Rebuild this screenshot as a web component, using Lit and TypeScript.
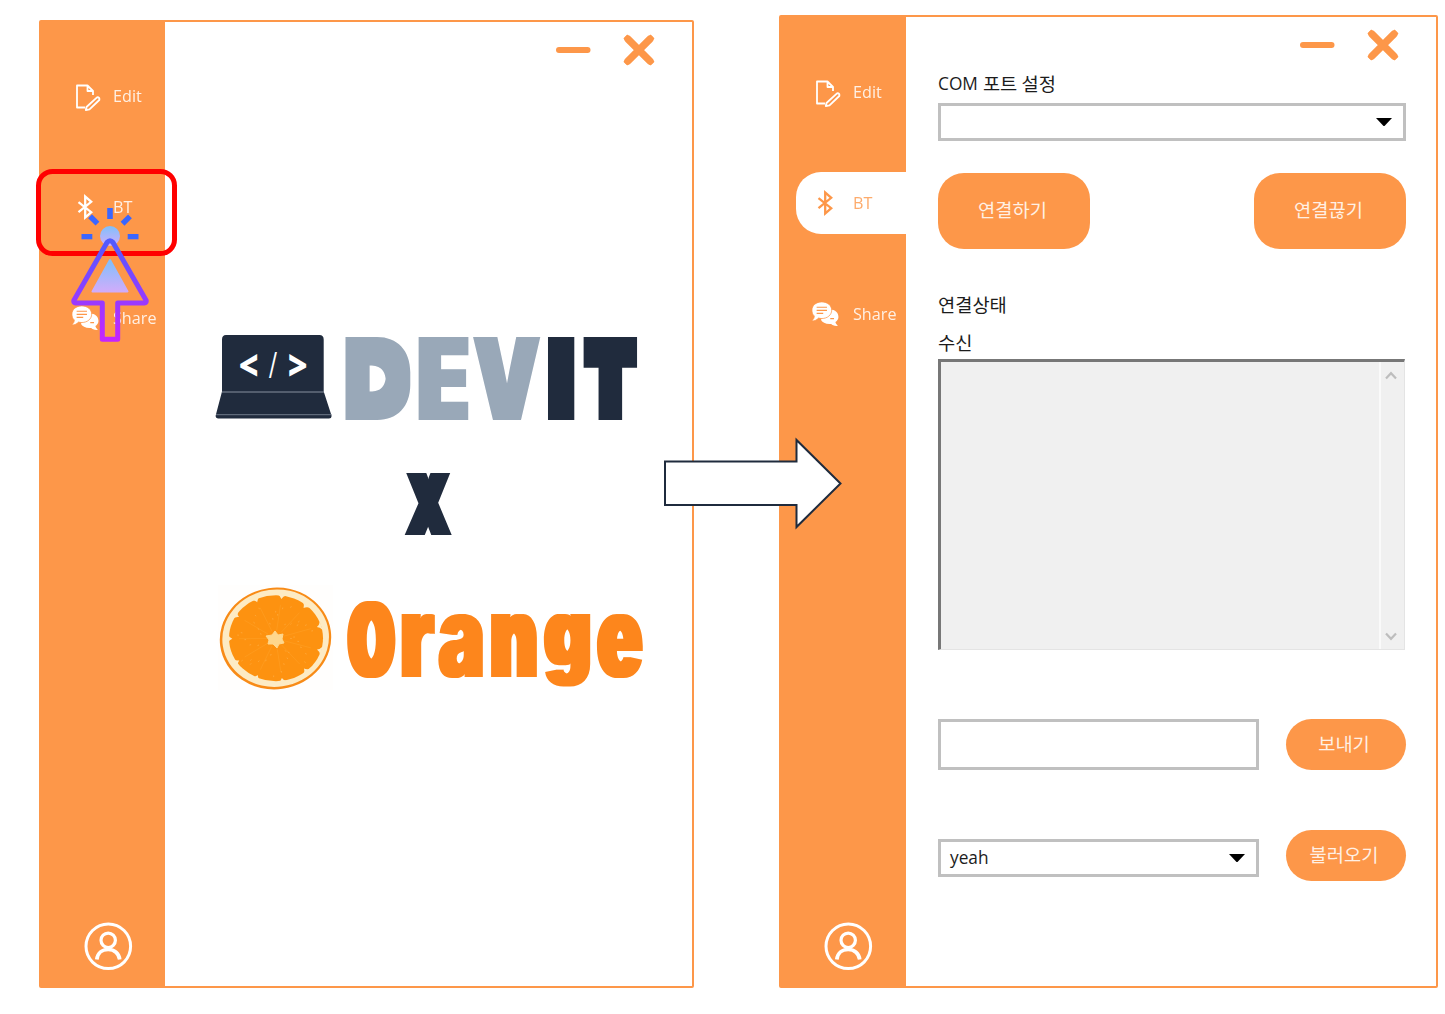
import { LitElement, html, svg, css } from "lit";
import { customElement, property } from "lit/decorators.js";

type Glyph = {
  ch: string;
  x: number;
  y: number;
  w: number;
  h: number;
  fill: string;
  /* how far the ink is thickened, sideways and vertically */
  dx?: number;
  dy?: number;
  weight?: number;
  font?: string;
};

const NAVY = "#202b3d";
const STEEL = "#99a8b8";
const ORANGE = "#fd861c";

const GLYPHS: Glyph[] = [
  { ch: "<", x: 240, y: 354, w: 17, h: 22.5, fill: "#fff", weight: 800, font: "Open Sans" },
  { ch: "/", x: 269, y: 351.5, w: 8, h: 26.5, fill: "#fff", weight: 400, font: "Open Sans" },
  { ch: ">", x: 289, y: 354, w: 17, h: 22.5, fill: "#fff", weight: 800, font: "Open Sans" },
  { ch: "D", x: 345, y: 336, w: 65.5, h: 83.5, fill: STEEL, dx: 3, dy: 6 },
  { ch: "E", x: 418, y: 336, w: 51, h: 83.5, fill: STEEL, dx: 3, dy: 0 },
  { ch: "V", x: 473, y: 336, w: 68, h: 83.5, fill: STEEL, dx: 3, dy: 0 },
  { ch: "I", x: 547, y: 336, w: 28, h: 83.5, fill: NAVY },
  { ch: "T", x: 583, y: 336, w: 54, h: 83.5, fill: NAVY, dx: 5, dy: 8 },
  { ch: "X", x: 404.5, y: 473, w: 47.5, h: 62, fill: NAVY, dx: 4, dy: 0 },
  { ch: "O", x: 347, y: 601, w: 49, h: 77, fill: ORANGE, dx: 4, dy: 0 },
  { ch: "r", x: 401, y: 614, w: 34, h: 63, fill: ORANGE, dx: 2, dy: 0 },
  { ch: "a", x: 438, y: 614, w: 45, h: 64, fill: ORANGE, dx: 2, dy: 0 },
  { ch: "n", x: 490.5, y: 614, w: 46.5, h: 63, fill: ORANGE, dx: 3, dy: 0 },
  { ch: "g", x: 544, y: 614, w: 46.5, h: 73, fill: ORANGE, dx: 3, dy: 0 },
  { ch: "e", x: 597, y: 614, w: 46, h: 64, fill: ORANGE, dx: 3, dy: 0 },
];

const pen = document.createElement("canvas").getContext("2d")!;

/* Scales one character so that its thickened ink fills the given box. */
function fitGlyph(g: Glyph, i: number) {
  const family = g.font ?? "Inter";
  const weight = g.weight ?? 900;
  const dx = g.dx ?? 0;
  const dy = g.dy ?? 0;
  pen.font = `${weight} 100px "${family}"`;
  const m = pen.measureText(g.ch);
  const inkW = m.actualBoundingBoxLeft + m.actualBoundingBoxRight;
  const inkH = m.actualBoundingBoxAscent + m.actualBoundingBoxDescent;
  const sx = (g.w - 2 * dx) / inkW;
  const sy = (g.h - 2 * dy) / inkH;
  const tx = g.x + dx + m.actualBoundingBoxLeft * sx;
  const ty = g.y + dy + m.actualBoundingBoxAscent * sy;
  const text = svg`<text font-family=${family} font-weight=${weight} font-size="100" fill=${g.fill}
    transform="matrix(${sx} 0 0 ${sy} ${tx} ${ty})">${g.ch}</text>`;
  if (!dx && !dy) return text;
  return svg`
    <filter id="grow${i}" filterUnits="userSpaceOnUse" x=${g.x - 5} y=${g.y - 5} width=${g.w + 10} height=${g.h + 10}
      color-interpolation-filters="sRGB"><feMorphology operator="dilate" radius="${Math.max(dx, 0.01)} ${Math.max(dy, 0.01)}"/></filter>
    <g filter="url(#grow${i})">${text}</g>`;
}

@customElement("brand-logo")
class BrandLogo extends LitElement {
  static styles = css`
    :host { display: block; }
    .art { display: block; width: 450px; height: 450px; }
  `;
  private slice() {
    const cx = 275.5, cy = 638.5;
    const notches = [];
    for (let i = 0; i < 11; i++) {
      const a = (i * 2 * Math.PI) / 11 + 0.28;
      const p = (r: number, d: number) =>
        `${(cx + Math.cos(a + d) * r * 1.08).toFixed(1)},${(cy + Math.sin(a + d) * r).toFixed(1)}`;
      notches.push(svg`
        <path d="M${p(44.5, -0.1)}Q${p(42.5, -0.02)} ${p(40, 0)}Q${p(42.5, 0.02)} ${p(44.5, 0.1)}Z" fill="#fdebc4"/>
        <path d="M${p(8, 0)}L${p(34, 0)}" stroke="#ffab36" stroke-width="0.7" opacity=".45"/>`);
    }
    const seeds = [];
    for (let i = 0; i < 40; i++) {
      const a = i * 2.4, r = 14 + ((i * 17) % 25);
      const x = cx + Math.cos(a) * r * 1.05, y = cy + Math.sin(a) * r;
      seeds.push(svg`<path d="M${x.toFixed(1)} ${y.toFixed(1)}l${(Math.cos(a) * 1.6).toFixed(1)} ${(Math.sin(a) * 1.6).toFixed(1)}" stroke="#ffb654" stroke-width="1" opacity=".55"/>`);
    }
    return svg`
      <rect x="218" y="585" width="115" height="105" fill="#fffefd"/>
      <g transform="rotate(-8 275.5 638.5)">
        <ellipse cx="275.500" cy="638.500" rx="55.800" ry="50.800" fill="#f88b17"/>
        <ellipse cx="275.700" cy="638.200" rx="53.400" ry="48.600" fill="#fdebc4"/>
      </g>
      <ellipse cx="276" cy="638.200" rx="47" ry="43" fill="#fd9210"/>
      ${notches}${seeds}
      <path d="M275 631l3 4 5-1-1 5 2 4-5 1-2 4-4-4-5 0 1-4-3-4 6-1z" fill="#fed78d" stroke="#fed78d" stroke-width="1" stroke-linejoin="round"/>`;
  }
  render() {
    return html`<svg class="art" viewBox="205 285 450 450">
      <path d="M226 335H319.500Q323.700 335 323.700 339.500V391.500L331.500 415.500Q332 418.500 329 418.500H218Q215.200 418.500 215.700 415.500L222 391.500V339.500Q222 335 226 335Z" fill=${NAVY}/>
      <path d="M222 392H324" stroke="#8791a0" stroke-width="1"/>
      <path d="M216 414.700H331.500" stroke="#6e7989" stroke-width="1"/>
      ${GLYPHS.map(fitGlyph)}
      ${this.slice()}
    </svg>`;
  }
}

@customElement("side-bar")
class SideBar extends LitElement {
  @property() active = "";
  static styles = css`
    :host { display: flex; flex-direction: column; background: #fd9749; box-sizing: border-box; padding: 43px 0 15px; }
    .nav { display: flex; flex-direction: column; gap: 49px; }
    .item {
      display: flex; align-items: center; height: 62px; margin-left: 15px; padding-left: 15px; gap: 12px;
      box-sizing: border-box; border-radius: 25px 0 0 25px; color: #fff0e4;
      font: 16.500px/22px "Open Sans", sans-serif; white-space: nowrap; --ink: #fff; --paper: #fd9749;
    }
    .on { background: #fff; color: #fdab6c; --ink: #fd9749; --paper: #fff; }
    .icon { width: 30px; height: 30px; flex: none; }
    .label { transform-origin: 0 50%; transform: scaleX(.98); }
    .user { width: 50px; height: 50px; margin: auto 0 0 42px; }
  `;
  private icon(name: string) {
    if (name === "Edit")
      return svg`<g fill="none" stroke="var(--ink)" stroke-width="1.800" stroke-linejoin="round">
        <path d="M22 14V10L16.500 4.500H6V26.500H14M16.500 4.500V10H22"/>
        <path d="M26 16.300Q28.900 16 28.300 19L18.500 28.300L14.800 29L15.500 26Z"/></g>`;
    if (name === "BT")
      return svg`<path d="M7.500 10.200L20.200 20.200L14.200 25.500V4.500L20.200 9.800L7.500 20.200" fill="none" stroke="var(--ink)" stroke-width="2.300"/>`;
    return svg`<g transform="translate(0 1) scale(.94)"><g fill="var(--ink)">
      <path d="M20 10C26 10 29.200 13.500 29.200 18C29.200 20.500 27.500 22.500 26 23.500C26 25 27.500 26.500 28.800 27.500C25 28 22.500 26.500 21.500 25.500C16 26 12 24 10.500 21Z"/>
      <path d="M11.500 2C17.500 2 22 5.800 22 10.800C22 15.900 17.500 19.700 11.500 19.700Q9.500 19.700 8 19.200C6.500 21 4 22.500 .8 22.200C2.800 20.500 3.500 19 3.500 17C1.800 15.500 1 13.500 1 10.800C1 5.800 5.500 2 11.500 2Z" stroke="var(--paper)" stroke-width=".8"/></g>
      <path d="M6 7.700H17M6 11H17M6 14.300H13M20.500 19.700H24.500" stroke="var(--paper)" stroke-width="1.300"/></g>`;
  }
  render() {
    return html`
      <nav class="nav">
        ${["Edit", "BT", "Share"].map(
          (n) => html`<div class="item ${n === this.active ? "on" : ""}">
            <svg class="icon" viewBox="0 0 30 30">${this.icon(n)}</svg><span class="label">${n}</span>
          </div>`
        )}
      </nav>
      <svg class="user" viewBox="0 0 50 50" fill="none" stroke="#fff">
        <circle cx="25.300" cy="25.300" r="22.300" stroke-width="3"/>
        <circle cx="25.200" cy="19.300" r="7.200" stroke-width="3.200"/>
        <path d="M13.800 38.500C14.500 32.500 19 28.500 25.200 28.500S36 32.500 36.700 38.500" stroke-width="3.700"/>
      </svg>`;
  }
}

@customElement("window-controls")
class WindowControls extends LitElement {
  static styles = css`
    :host { display: flex; justify-content: flex-end; }
    .marks { width: 100px; height: 36px; display: block; }
  `;
  render() {
    return html`<svg class="marks" viewBox="0 0 100 36" fill="none" stroke="#fd9749" stroke-linecap="round">
      <path d="M4 18H32.500" stroke-width="6"/>
      <path d="M73 7.100L94.900 29M94.900 7.100L73 29" stroke-width="7.400"/>
      <path d="M72.300 6.400L95.600 29.700M95.600 6.400L72.300 29.700" stroke-width="5.500" stroke-linecap="square"/>
    </svg>`;
  }
}

@customElement("port-panel")
class PortPanel extends LitElement {
  static styles = css`
    :host {
      display: flex; flex-direction: column; box-sizing: border-box; padding: 10px 30px 0 32px; color: #1c1c1c;
      font: 17.300px/24px "Open Sans", "Noto Sans CJK KR", sans-serif;
    }
    .controls { margin-right: 7px; }
    .ko { font: 18.700px/24px "Noto Sans CJK KR", sans-serif; }
    .label { height: 24px; line-height: 24px; white-space: nowrap; display: flex; align-items: center; gap: 5px; }
    .port-label { margin-top: 8px; }
    .com { padding-top: 2px; }
    .port { margin-top: 8px; }
    .box {
      box-sizing: border-box; border: 3px solid #c0c0c0; background: #fff; height: 38px; width: 100%;
      display: flex; align-items: center; justify-content: space-between; padding: 0 11px 0 9px;
    }
    .caret { width: 16px; height: 8px; }
    .row { display: flex; justify-content: space-between; align-items: center; }
    .btn {
      background: #fd9749; color: #fff0e4; display: flex; align-items: center; justify-content: center;
      box-sizing: border-box; width: 120px; height: 51px; border-radius: 26px; padding: 0 4px 4px 0;
    }
    .big { width: 152px; height: 76px; border-radius: 26px; padding: 0 3px 4px 0; }
    .pair { margin-top: 32px; }
    .state { margin-top: 43px; }
    .recv { margin-top: 14px; }
    .log {
      box-sizing: border-box; height: 291px; margin: 5px 1px 0 0; background: #f0f0f0; display: flex; justify-content: flex-end;
      border: solid; border-width: 3px 1px 1px 3px; border-color: #777 #e4e4e4 #e4e4e4 #777;
    }
    .scroll {
      width: 25px; border-left: 2px solid #fafafa; box-sizing: border-box; display: flex; flex-direction: column;
      justify-content: space-between; align-items: center; padding: 9px 4px 8px 0;
    }
    .chev { width: 12px; height: 9px; }
    .send { margin-top: 69px; }
    .load { margin-top: 60px; }
    .field { width: 321px; height: 51px; }
    .pick { width: 321px; height: 38px; margin-top: 5px; }
  `;
  private caret() {
    return html`<svg class="caret" viewBox="0 0 16 8"><path d="M0 0H16L8.500 8H7.500Z" fill="#000"/></svg>`;
  }
  render() {
    return html`
      <window-controls class="controls"></window-controls>
      <div class="label port-label"><span class="com">COM</span><span class="ko">포트 설정</span></div>
      <div class="box port"><span></span>${this.caret()}</div>
      <div class="row pair"><div class="btn big ko">연결하기</div><div class="btn big ko">연결끊기</div></div>
      <div class="label state ko">연결상태</div>
      <div class="label recv ko">수신</div>
      <div class="log">
        <div class="scroll">
          <svg class="chev" viewBox="0 0 12 9" fill="none" stroke="#bdbdbd" stroke-width="2.200"><path d="M1 7.500L6 2.200L11 7.500"/></svg>
          <svg class="chev" viewBox="0 0 12 9" fill="none" stroke="#bdbdbd" stroke-width="2.200"><path d="M1 1.500L6 6.800L11 1.500"/></svg>
        </div>
      </div>
      <div class="row send"><div class="box field"></div><div class="btn ko">보내기</div></div>
      <div class="row load"><div class="box pick"><span>yeah</span>${this.caret()}</div><div class="btn ko">불러오기</div></div>`;
  }
}

@customElement("app-root")
class AppRoot extends LitElement {
  static styles = css`
    :host { display: block; width: 1445px; height: 1014px; position: relative; background: #fff; overflow: hidden; }
    .stage { display: flex; align-items: flex-end; gap: 85px; box-sizing: border-box; height: 1014px; padding: 0 7px 26px 39px; }
    .window { box-sizing: border-box; border: 2px solid #fd9749; display: flex; background: #fff; border-radius: 2px; }
    .home { width: 655px; height: 968px; }
    .bluetooth { width: 659px; height: 973px; }
    .side { width: 124px; flex: none; }
    .wide { width: 125px; padding-top: 44px; }
    .body { flex: 1; display: flex; flex-direction: column; padding: 10px 37px 0 40px; }
    .logo { margin-top: 217px; }
    .panel { flex: 1; }
    .overlay { position: absolute; inset: 0; width: 1445px; height: 1014px; }
  `;
  render() {
    return html`
      <div class="stage">
        <section class="window home">
          <side-bar class="side"></side-bar>
          <main class="body"><window-controls></window-controls><brand-logo class="logo"></brand-logo></main>
        </section>
        <section class="window bluetooth">
          <side-bar class="side wide" active="BT"></side-bar>
          <port-panel class="panel"></port-panel>
        </section>
      </div>
      <svg class="overlay" viewBox="0 0 1445 1014" fill="none">
        <defs>
          <linearGradient id="edge" gradientUnits="userSpaceOnUse" x1="0" y1="208" x2="0" y2="341">
            <stop offset="0" stop-color="#2a6cff"/><stop offset="1" stop-color="#c724ff"/>
          </linearGradient>
          <linearGradient id="core" x1="0" y1="0" x2="0" y2="1">
            <stop offset="0" stop-color="#80c0fb"/><stop offset="1" stop-color="#d0acfa"/>
          </linearGradient>
        </defs>
        <path d="M665 461.500H796.500V440L840.500 483.500L796.500 527V505H665Z" fill="#fff" stroke="#1f2b3d" stroke-width="2"/>
        <rect x="38.500" y="171.500" width="136" height="82" rx="14" stroke="#f00" stroke-width="5"/>
        <circle cx="110" cy="236" r="10" fill="url(#core)"/>
        <path d="M107 242.500Q110 239 113 242.500L146.200 300.500Q146.500 303 144.500 303H117.700V339.200H102.300V303H75.500Q73.500 303 73.800 300.500Z" stroke="url(#edge)" stroke-width="5" stroke-linejoin="round"/>
        <path d="M110 260L127.500 291.500H92.500Z" fill="url(#core)" stroke="url(#core)" stroke-width="2" stroke-linejoin="round"/>
        <g fill="#3a66ff">
          <rect x="107.200" y="208" width="5.600" height="11"/>
          <rect x="81.500" y="234" width="10.800" height="5.300"/>
          <rect x="127.700" y="234" width="10.800" height="5.300"/>
          <rect x="88.500" y="217.300" width="10.500" height="5.400" transform="rotate(45 93.800 220)"/>
          <rect x="121" y="217.300" width="10.500" height="5.400" transform="rotate(-45 126.300 220)"/>
        </g>
      </svg>`;
  }
}
